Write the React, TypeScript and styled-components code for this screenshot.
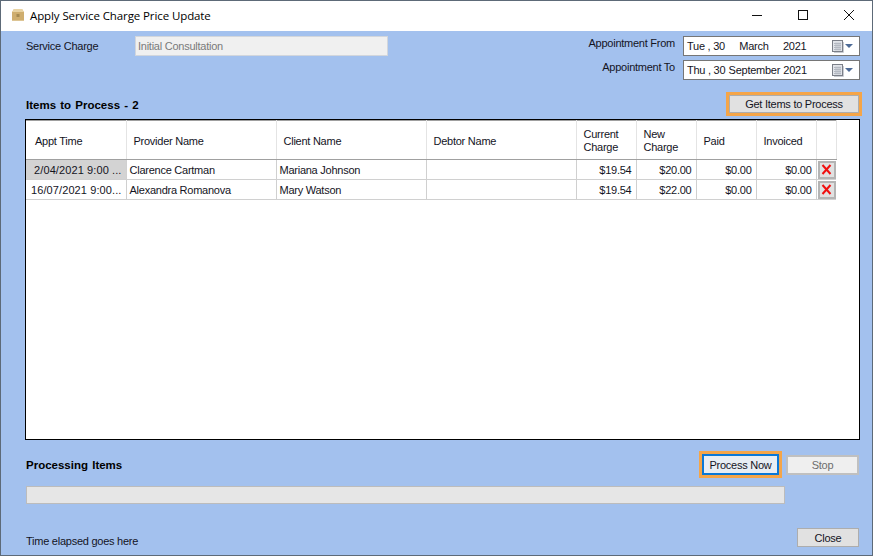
import React from 'react';
import styled, { createGlobalStyle } from 'styled-components';

type Row = {
  time: string;
  provider: string;
  client: string;
  current: string;
  next: string;
  selected?: boolean;
};

const rows: Row[] = [
  { time: '2/04/2021 9:00 ...', provider: 'Clarence Cartman', client: 'Mariana Johnson', current: '$19.54', next: '$20.00', selected: true },
  { time: '16/07/2021 9:00...', provider: 'Alexandra Romanova', client: 'Mary Watson', current: '$19.54', next: '$22.00' },
];

const colWidths = [100, 150, 150, 150, 60, 60, 60, 60, 20];

const BoxIcon = () => (
  <svg width="14" height="14" viewBox="0 0 14 14">
    <path d="M1 4 L3 1 H11 L13 4 V12.5 H1 Z" fill="#d9b878" />
    <path d="M1 4 H13 V12.5 H1 Z" fill="#cfae6f" />
    <path d="M3 1 H11 L13 4 H1 Z" fill="#e8d3a3" />
    <rect x="5.5" y="6" width="3" height="3" fill="#a58a52" />
  </svg>
);

const CalendarIcon = () => (
  <svg width="12" height="13" viewBox="0 0 12 13">
    <rect x="0.5" y="0.5" width="10" height="11" fill="#e2e5ea" stroke="#7b7f88" />
    <path d="M2 3.5 H9 M2 5.5 H9 M2 7.5 H9 M2 9.5 H9 M4 2.5 V10.5 M6 2.5 V10.5 M8 2.5 V10.5" stroke="#b4b9c2" />
    <path d="M11.5 2 V12.5 H2" fill="none" stroke="#c9ccd2" />
  </svg>
);

const DeleteIcon = () => (
  <svg width="11" height="11" viewBox="0 0 11 11">
    <path d="M1.5 1 L9.5 10 M9.5 1 L1.5 10" stroke="#f01010" strokeWidth="2" />
  </svg>
);

const App = () => {
  return (
    <>
      <GlobalStyle />
      <Window>
        <TitleBar>
          <BoxIcon />
          <Title>Apply Service Charge Price Update</Title>
          <WindowControls>
            <svg width="12" height="12" viewBox="0 0 12 12">
              <path d="M1 6.5 H11" stroke="#111" />
            </svg>
            <svg width="12" height="12" viewBox="0 0 12 12">
              <rect x="1.5" y="1.5" width="9" height="9" fill="none" stroke="#111" />
            </svg>
            <svg width="12" height="12" viewBox="0 0 12 12">
              <path d="M1 1 L11 11 M11 1 L1 11" stroke="#111" />
            </svg>
          </WindowControls>
        </TitleBar>

        <Body>
          <TopRow>
            <ServiceField>
              <ServiceLabel>Service Charge</ServiceLabel>
              <DisabledInput>Initial Consultation</DisabledInput>
            </ServiceField>
            <DateGrid>
              <DateLabel>Appointment From</DateLabel>
              <DateBox>
                <span>Tue , 30</span>
                <Month>March</Month>
                <span>2021</span>
                <DateButton>
                  <CalendarIcon />
                  <Caret />
                </DateButton>
              </DateBox>
              <DateLabel>Appointment To</DateLabel>
              <DateBox>
                <span>Thu , 30</span>
                <Month>September</Month>
                <span>2021</span>
                <DateButton>
                  <CalendarIcon />
                  <Caret />
                </DateButton>
              </DateBox>
            </DateGrid>
          </TopRow>

          <ItemsRow>
            <ItemsTitle>Items to Process - 2</ItemsTitle>
            <GetItemsButton>Get Items to Process</GetItemsButton>
          </ItemsRow>

          <GridPanel>
            <Grid>
              <colgroup>
                {colWidths.map((w, i) => (
                  <col key={i} width={w} />
                ))}
              </colgroup>
              <thead>
                <tr>
                  <HeadCell>Appt Time</HeadCell>
                  <HeadCell>Provider Name</HeadCell>
                  <HeadCell>Client Name</HeadCell>
                  <HeadCell>Debtor Name</HeadCell>
                  <HeadCell>Current<br />Charge</HeadCell>
                  <HeadCell>New<br />Charge</HeadCell>
                  <HeadCell>Paid</HeadCell>
                  <HeadCell>Invoiced</HeadCell>
                  <HeadCell />
                </tr>
              </thead>
              <tbody>
                {rows.map((row) => (
                  <tr key={row.time}>
                    <TimeCell $align="right" $selected={row.selected}>{row.time}</TimeCell>
                    <Cell>{row.provider}</Cell>
                    <Cell>{row.client}</Cell>
                    <Cell />
                    <Cell $align="right">{row.current}</Cell>
                    <Cell $align="right">{row.next}</Cell>
                    <Cell $align="right">$0.00</Cell>
                    <Cell $align="right">$0.00</Cell>
                    <ActionCell>
                      <DeleteButton><DeleteIcon /></DeleteButton>
                    </ActionCell>
                  </tr>
                ))}
              </tbody>
            </Grid>
          </GridPanel>

          <ProcessRow>
            <SectionTitle>Processing Items</SectionTitle>
            <ProcessActions>
              <ProcessButton>Process Now</ProcessButton>
              <StopButton disabled>Stop</StopButton>
            </ProcessActions>
          </ProcessRow>

          <ProgressBar />

          <Footer>
            <Elapsed>Time elapsed goes here</Elapsed>
            <CloseButton>Close</CloseButton>
          </Footer>
        </Body>
      </Window>
    </>
  );
};

const GlobalStyle = createGlobalStyle`
  html, body {
    margin: 0;
    padding: 0;
    background: #5f6b78;
  }
  * {
    box-sizing: border-box;
  }
`;

const Window = styled.div`
  width: 873px;
  height: 556px;
  display: flex;
  flex-direction: column;
  border: 1px solid #5d6a78;
  font-family: "Liberation Sans", Arial, sans-serif;
  font-size: 11px;
  letter-spacing: -0.25px;
  color: #14141e;
  overflow: hidden;
`;

const TitleBar = styled.div`
  height: 30px;
  flex-shrink: 0;
  display: flex;
  align-items: center;
  padding: 0 0 2px 10px;
  background: #fff;
`;

const Title = styled.div`
  margin-left: 5px;
  font-family: "Open Sans", sans-serif;
  font-size: 11.5px;
  letter-spacing: -0.1px;
  color: #000;
`;

const WindowControls = styled.div`
  margin-left: auto;
  padding-right: 17px;
  display: flex;
  gap: 34px;
`;

const Body = styled.div`
  flex: 1;
  min-height: 0;
  display: flex;
  flex-direction: column;
  padding: 5px 12px 8px 24px;
  background: #a3c1ee;
`;

const TopRow = styled.div`
  display: flex;
  justify-content: space-between;
  align-items: flex-start;
`;

const ServiceField = styled.div`
  display: flex;
  align-items: center;
  padding-left: 1px;
`;

const ServiceLabel = styled.div`
  width: 109px;
`;

const DisabledInput = styled.div`
  width: 253px;
  height: 20px;
  padding-left: 2px;
  line-height: 18px;
  background: #f0f0f0;
  border: 1px solid #d2d6dc;
  color: #7a7a7a;
`;

const DateGrid = styled.div`
  display: grid;
  grid-template-columns: auto 177px;
  column-gap: 8px;
  row-gap: 4px;
`;

const DateLabel = styled.div`
  text-align: right;
  line-height: 15px;
`;

const DateBox = styled.div`
  height: 20px;
  display: flex;
  align-items: center;
  padding-left: 3px;
  background: #fff;
  border: 1px solid #767676;
`;

const Month = styled.span`
  width: 52px;
  margin: 0 3px;
  text-align: center;
`;

const DateButton = styled.div`
  margin-left: auto;
  padding-right: 6px;
  display: flex;
  align-items: center;
  gap: 1px;
`;

const Caret = styled.span`
  width: 0;
  height: 0;
  border-left: 4px solid transparent;
  border-right: 4px solid transparent;
  border-top: 4px solid #4d6a96;
`;

const ItemsRow = styled.div`
  display: flex;
  align-items: center;
  justify-content: space-between;
  height: 18px;
  margin-top: 15px;
  padding: 0 1px;
`;

const SectionTitle = styled.div`
  font-weight: 700;
  font-size: 11.5px;
  letter-spacing: 0;
  word-spacing: 1px;
  color: #000;
`;

const ItemsTitle = styled(SectionTitle)`
  margin-top: 2px;
`;

const BaseButton = styled.button`
  font: inherit;
  letter-spacing: inherit;
  color: inherit;
  padding: 0;
  background: #e1e1e1;
  border: 1px solid #adadad;
`;

const GetItemsButton = styled(BaseButton)`
  width: 130px;
  height: 18px;
  box-shadow: 0 0 0 3px #f5a548;
`;

const GridPanel = styled.div`
  flex: 1;
  min-height: 0;
  margin-top: 6px;
  background: #fff;
  border: 1px solid #000;
`;

const Grid = styled.table`
  width: 810px;
  table-layout: fixed;
  border-collapse: collapse;
`;

const HeadCell = styled.th`
  height: 39px;
  padding: 2px 0 0 7px;
  font-weight: 400;
  text-align: left;
  line-height: 13px;
  border-top: 1px solid #a0a0a0;
  border-bottom: 1px solid #a0a0a0;
  border-right: 1px solid #e4e4e4;

  &:first-child {
    padding-left: 9px;
  }
`;

const Cell = styled.td<{ $align?: string; $selected?: boolean }>`
  height: 20px;
  padding: 0 4px 0 3px;
  white-space: nowrap;
  overflow: hidden;
  text-align: ${(p) => p.$align || 'left'};
  background: ${(p) => (p.$selected ? '#d3d3d3' : '#fff')};
  border-right: 1px solid #d0d0d0;
  border-bottom: 1px solid #d0d0d0;
`;

const TimeCell = styled(Cell)`
  letter-spacing: 0.1px;
`;

const ActionCell = styled.td`
  padding: 0 1px;
  border-bottom: 1px solid #d0d0d0;
`;

const DeleteButton = styled(BaseButton)`
  width: 18px;
  height: 18px;
  display: flex;
  align-items: center;
  justify-content: center;
  border-width: 2px;
  border-color: #b4b4b4;
`;

const ProcessRow = styled.div`
  display: flex;
  align-items: center;
  justify-content: space-between;
  margin-top: 14px;
  padding: 0 1px;
`;

const ProcessActions = styled.div`
  display: flex;
  align-items: center;
  gap: 7px;
`;

const ProcessButton = styled(BaseButton)`
  width: 77px;
  height: 21px;
  background: #e8edf3;
  border: 2px solid #0a78d7;
  box-shadow: 0 0 0 3px #f5a548;
`;

const StopButton = styled(BaseButton)`
  width: 73px;
  height: 20px;
  background: #efefef;
  border: 2px solid #c0c0c0;
  color: #6d6d6d;
`;

const ProgressBar = styled.div`
  width: 759px;
  height: 18px;
  margin: 11px 0 0 1px;
  background: #e6e6e6;
  border: 1px solid #bcbcbc;
`;

const Footer = styled.div`
  height: 43px;
  flex-shrink: 0;
  display: flex;
  align-items: flex-end;
  justify-content: space-between;
  padding: 0 1px;
`;

const Elapsed = styled.div`
  line-height: 14px;
  margin-bottom: -1px;
`;

const CloseButton = styled(BaseButton)`
  width: 62px;
  height: 19px;
`;

export default App;
